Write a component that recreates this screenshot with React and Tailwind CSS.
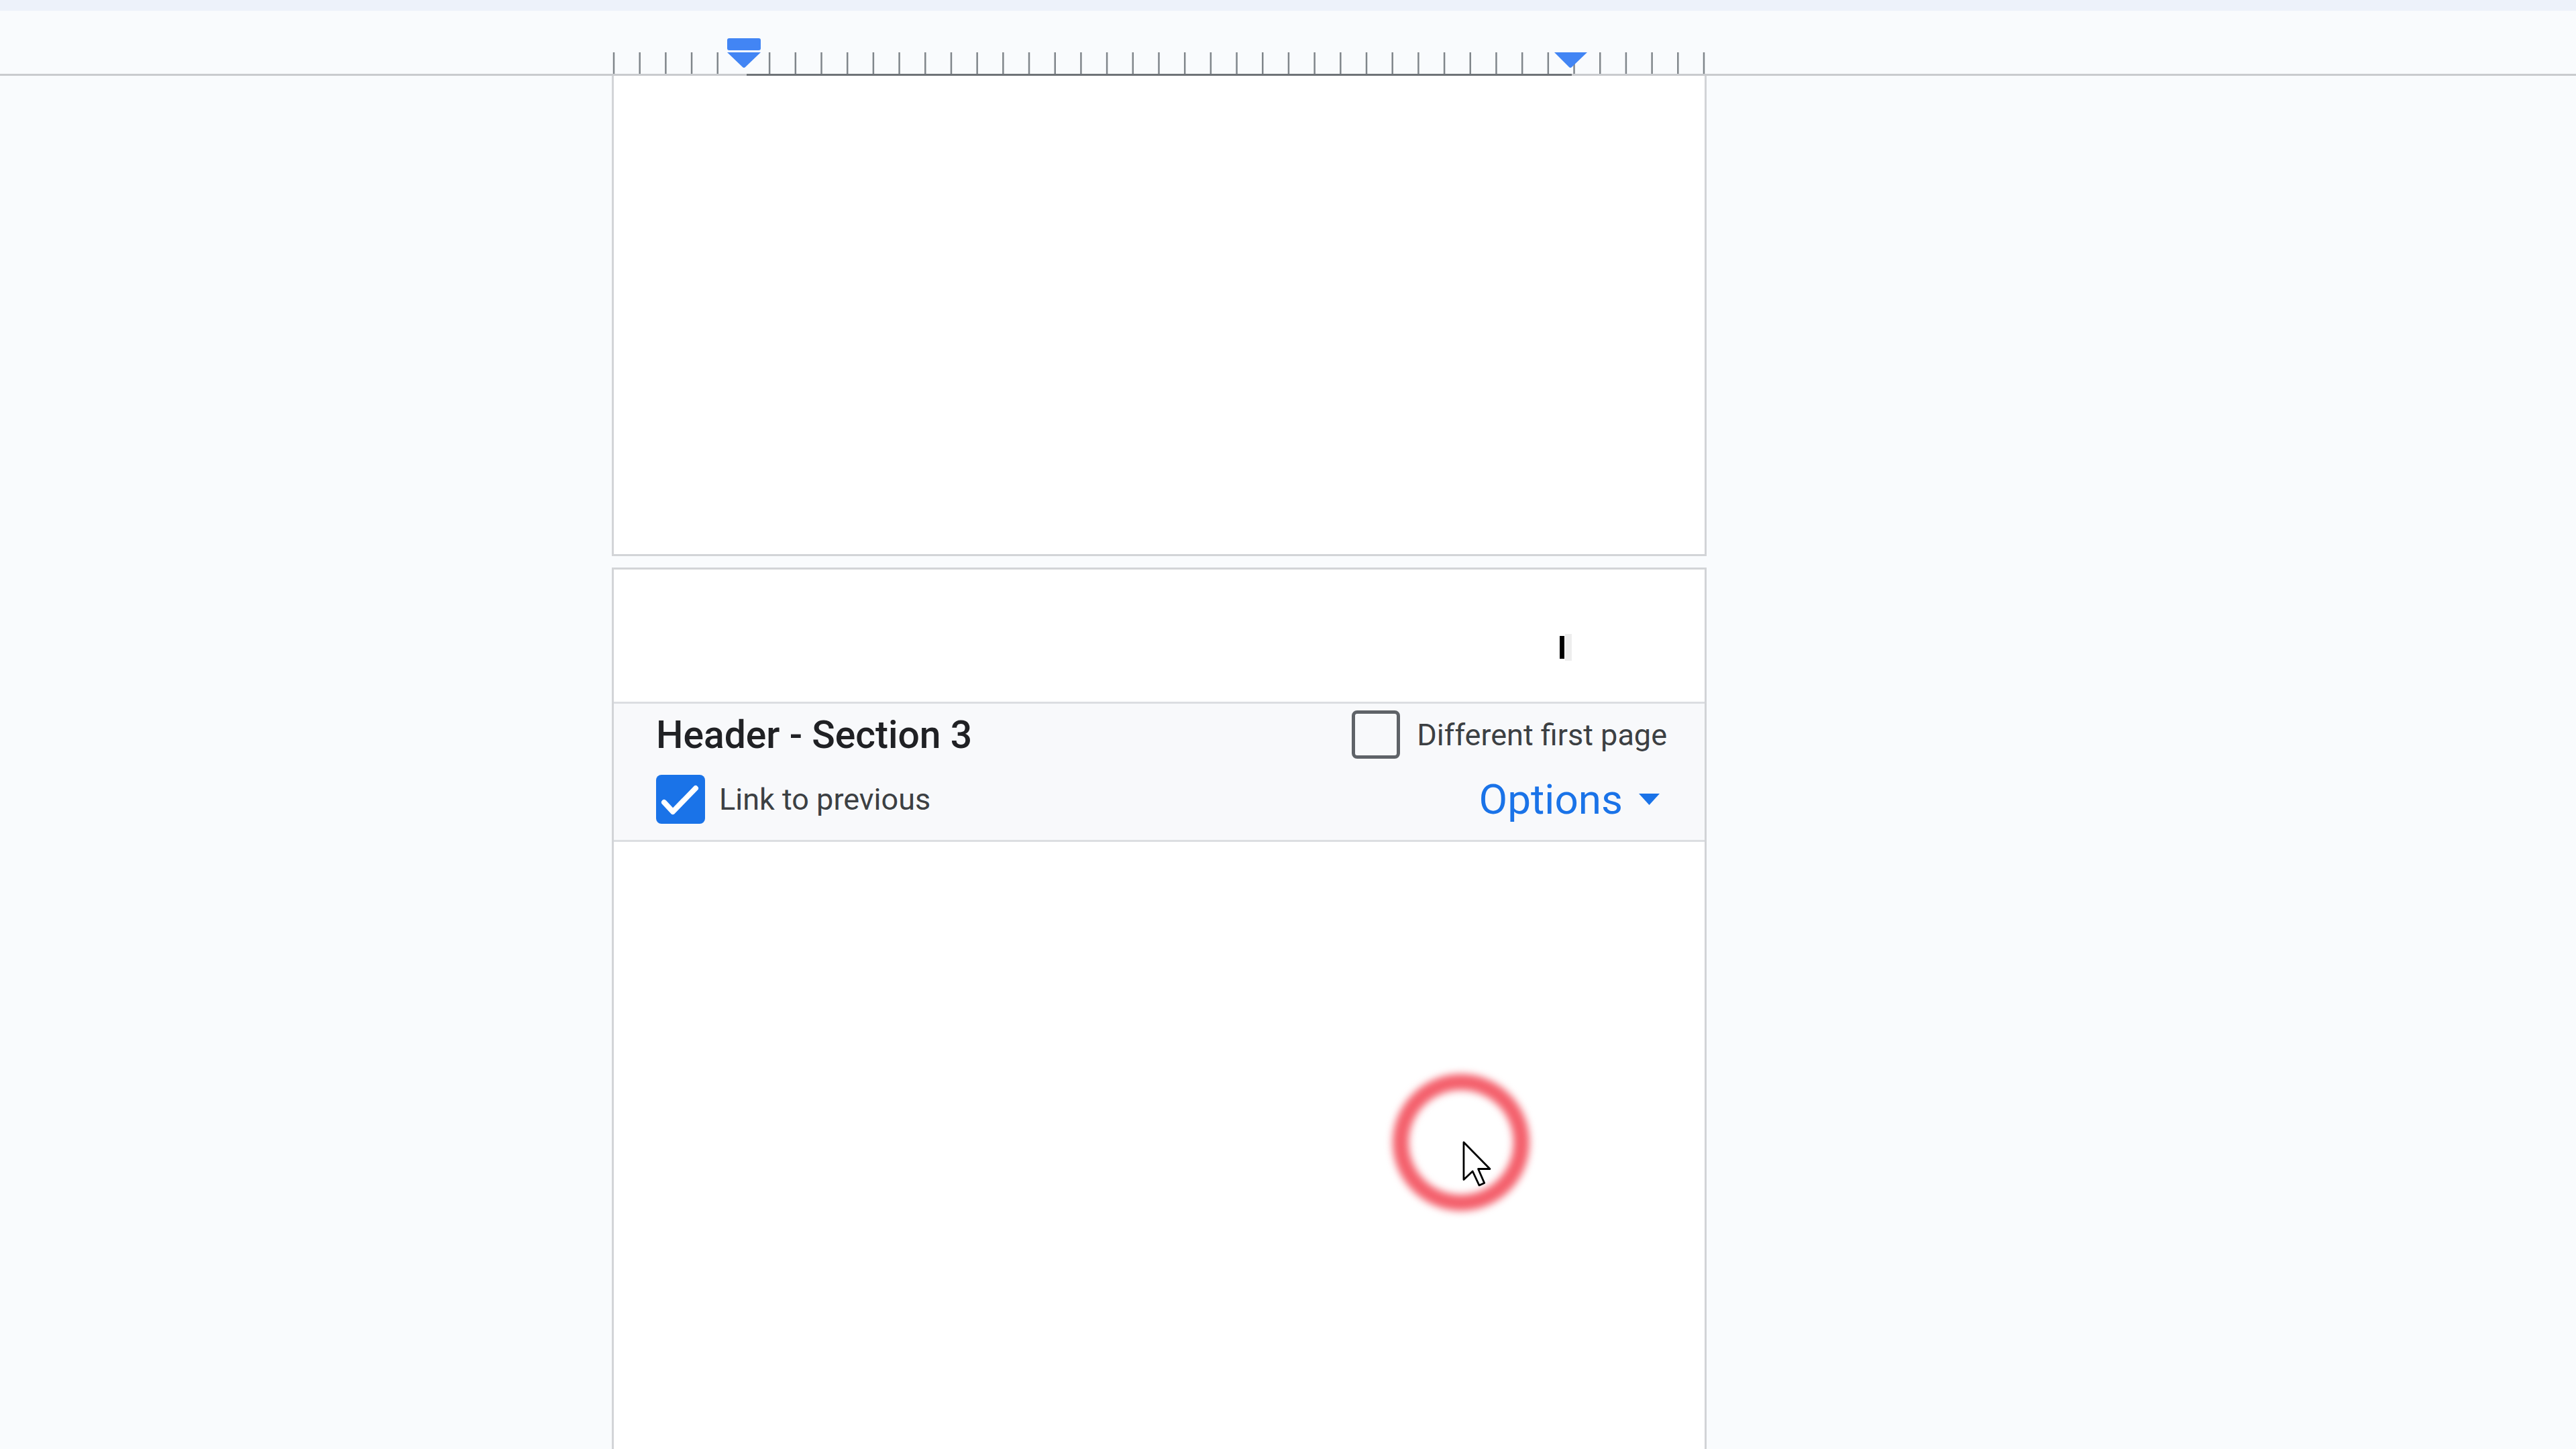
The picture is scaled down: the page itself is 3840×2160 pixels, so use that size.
import React from 'react';

const TICKS = Array.from({ length: 43 }, (_, i) => i).filter((i) => i !== 5);

const Ruler = () => (
  <div className="h-[97px] border-b-[3px] border-[#c9cbce]">
    <svg
      className="ml-[912px] overflow-visible"
      width="1631"
      height="97"
      viewBox="0 0 1631 97"
    >
      {TICKS.map((i) => {
        const x = 3 + i * 38.69;
        return (
          <line key={i} x1={x} x2={x} y1="62" y2="94" stroke="#80868b" strokeWidth="2.5" />
        );
      })}
      {/* margin line */}
      <rect x="201" y="94" width="1230" height="3" fill="#6f7377" />
      {/* first line indent */}
      <rect x="172" y="41" width="50" height="18" rx="3" fill="#4285f4" />
      {/* left indent */}
      <path d="M172 62 H222 L199 84 Q197 86 195 84 Z" fill="#4285f4" />
      {/* right indent */}
      <path d="M1405 62 H1454 L1431 84 Q1429 86 1427 84 Z" fill="#4285f4" />
    </svg>
  </div>
);

const CheckedBox = () => (
  <div className="w-[73px] h-[73px] rounded-[8px] bg-[#1a73e8] flex items-center justify-center">
    <svg width="73" height="73" viewBox="0 0 73 73">
      <polyline
        points="12,41 25,55 59,20"
        fill="none"
        stroke="#ffffff"
        strokeWidth="8"
        strokeLinecap="round"
        strokeLinejoin="round"
      />
    </svg>
  </div>
);

const HeaderBar = () => (
  <div className="h-[209px] border-y-[3px] border-[#dcdee1] bg-[#f8f9fb] pt-[9px] pl-[63px] pr-[56px] flex flex-col gap-[23px]">
    {/* 제목 + 첫 페이지 */}
    <div className="h-[74px] flex items-center justify-between">
      <span className="text-[57px] font-medium text-[#202124] leading-none">Header - Section 3</span>
      <div className="flex items-center gap-[25px]">
        <div className="w-[72px] h-[72px] rounded-[8px] border-[5px] border-[#5f6368]" />
        <span className="text-[45px] text-[#3c4043] leading-none">Different first page</span>
      </div>
    </div>
    {/* 이전 연결 + 옵션 */}
    <div className="h-[73px] flex items-center justify-between pr-[11px]">
      <div className="flex items-center gap-[21px]">
        <CheckedBox />
        <span className="text-[45px] text-[#3c4043] leading-none">Link to previous</span>
      </div>
      <div className="flex items-center gap-[24px]">
        <span className="text-[62px] text-[#1a73e8] leading-none">Options</span>
        <svg width="31" height="17" viewBox="0 0 31 17">
          <path d="M0 0 H31 L15.5 17 Z" fill="#1a73e8" />
        </svg>
      </div>
    </div>
  </div>
);

const App = () => {
  return (
    <div
      className="relative w-[3840px] h-[2160px] overflow-hidden bg-[#f9fbfd]"
      style={{ fontFamily: 'Roboto, "Noto Sans", Arial, sans-serif' }}
    >
      <div className="h-[16px] bg-[#edf2fa]" />
      <Ruler />

      <div className="ml-[912px] w-[1632px] flex flex-col gap-[17px]">
        {/* page 1 */}
        <div className="h-[716px] bg-white border-x-[3px] border-b-[3px] border-[#d2d4d7]" />

        {/* page 2 */}
        <div className="h-[1400px] bg-white border-x-[3px] border-t-[3px] border-[#d2d4d7] flex flex-col">
          <div className="relative h-[197px]">
            <div className="absolute left-[1418px] top-[96px] w-[10px] h-[40px] bg-[#eeeeee]" />
            <div className="absolute left-[1410px] top-[99px] w-[7px] h-[34px] bg-black" />
          </div>
          <HeaderBar />
        </div>
      </div>

      {/* click highlight */}
      <div className="absolute left-[2076px] top-[1601px] w-[204px] h-[204px] rounded-full border-[24px] border-[#f4606c] blur-[6px]" />
      <svg
        className="absolute left-[2180px] top-[1701px]"
        width="44"
        height="68"
        viewBox="-0.5 -0.5 12.5 19.5"
      >
        <path
          d="M0 0 V16 L3.8 12.4 L6.6 18.4 L8.8 17.4 L6.2 11.4 H11.2 Z"
          fill="#ffffff"
          stroke="#000000"
          strokeWidth="0.8"
          strokeLinejoin="round"
        />
      </svg>
    </div>
  );
};

export default App;
